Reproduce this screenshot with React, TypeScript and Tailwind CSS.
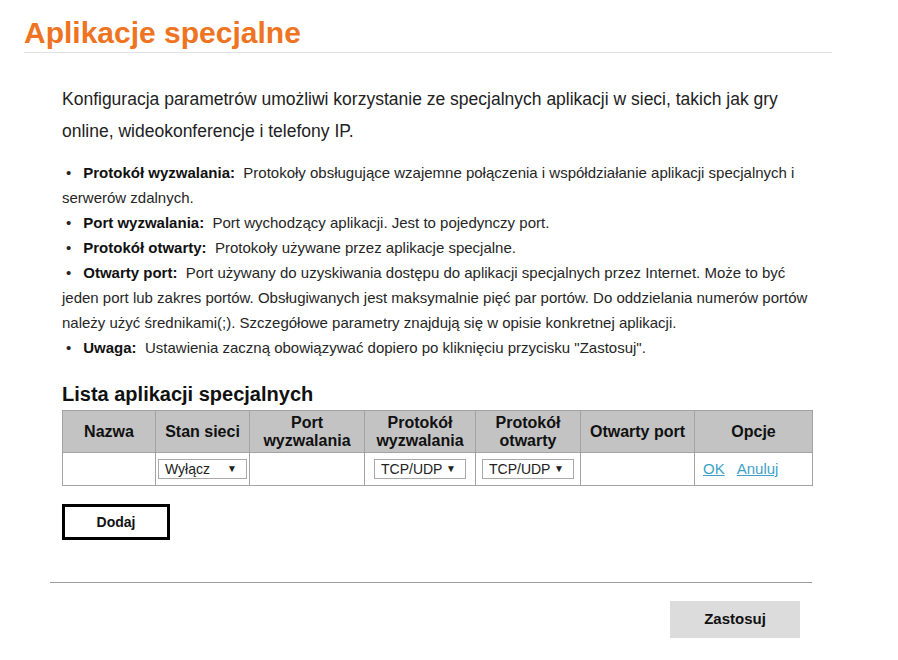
import React from "react";

const font = { fontFamily: '"Liberation Sans", Arial, sans-serif' };

function Select({ label, w }: { label: string; w: string }) {
  return (
    <div className={`mx-auto flex h-[20px] ${w} items-center justify-between border border-[#a9a9a9] bg-white pl-[6px] pr-[9px] text-[14px] leading-none text-[#222]`}>
      <span>{label}</span>
      <span className="text-[10px]">▼</span>
    </div>
  );
}

const bullets: { b: string; t: string }[] = [
  {
    b: "Protokół wyzwalania:",
    t: "Protokoły obsługujące wzajemne połączenia i współdziałanie aplikacji specjalnych i serwerów zdalnych.",
  },
  { b: "Port wyzwalania:", t: "Port wychodzący aplikacji. Jest to pojedynczy port." },
  { b: "Protokół otwarty:", t: "Protokoły używane przez aplikacje specjalne." },
  {
    b: "Otwarty port:",
    t: "Port używany do uzyskiwania dostępu do aplikacji specjalnych przez Internet. Może to być jeden port lub zakres portów. Obsługiwanych jest maksymalnie pięć par portów. Do oddzielania numerów portów należy użyć średnikami(;). Szczegółowe parametry znajdują się w opisie konkretnej aplikacji.",
  },
  { b: "Uwaga:", t: 'Ustawienia zaczną obowiązywać dopiero po kliknięciu przycisku "Zastosuj".' },
];

export default function App() {
  return (
    <div className="min-h-[660px] w-[898px] bg-white text-[#1a1a1a]" style={font}>
      <div className="ml-[24px] w-[808px] pt-[16px]">
        <h1 className="text-[30px] font-bold leading-[34px] text-[#ee7422]">Aplikacje specjalne</h1>
        <div className="mt-[2px] h-px bg-[#e2e2e2]" />
      </div>

      <div className="ml-[62px] w-[750px]">
        <p className="mt-[30px] w-[740px] text-[17.5px] leading-[32px] text-[#222]">
          Konfiguracja parametrów umożliwi korzystanie ze specjalnych aplikacji w sieci, takich jak gry online, wideokonferencje i telefony IP.
        </p>

        <div className="mt-[13px] w-[750px] text-[15px] leading-[25px] text-[#262626]">
          {bullets.map((x) => (
            <div key={x.b}>
              <span className="pl-[4px] pr-[12px]">•</span>
              <span className="font-bold text-[#111]">{x.b}</span>
              {"\u00a0 "}
              {x.t}
            </div>
          ))}
        </div>

        <h2 className="mt-[22px] text-[20px] font-bold leading-[24px] text-[#111]">Lista aplikacji specjalnych</h2>

        <table className="mt-[4px] w-[750px] table-fixed border-collapse border border-[#a3a3a3] text-center">
          <colgroup>
            <col className="w-[93px]" />
            <col className="w-[94px]" />
            <col className="w-[115px]" />
            <col className="w-[111px]" />
            <col className="w-[105px]" />
            <col className="w-[114px]" />
            <col className="w-[118px]" />
          </colgroup>
          <thead>
            <tr className="h-[42px] bg-[#c3c3c3] text-[16px] font-bold leading-[18px] text-[#111]">
              <th className="border border-[#a3a3a3]">Nazwa</th>
              <th className="border border-[#a3a3a3]">Stan sieci</th>
              <th className="border border-[#a3a3a3]">Port<br />wyzwalania</th>
              <th className="border border-[#a3a3a3]">Protokół<br />wyzwalania</th>
              <th className="border border-[#a3a3a3]">Protokół<br />otwarty</th>
              <th className="border border-[#a3a3a3]">Otwarty port</th>
              <th className="border border-[#a3a3a3]">Opcje</th>
            </tr>
          </thead>
          <tbody>
            <tr className="h-[33px]">
              <td className="border border-[#a3a3a3]"></td>
              <td className="border border-[#a3a3a3]"><Select label="Wyłącz" w="w-[89px]" /></td>
              <td className="border border-[#a3a3a3]"></td>
              <td className="border border-[#a3a3a3]"><Select label="TCP/UDP" w="w-[92px]" /></td>
              <td className="border border-[#a3a3a3]"><Select label="TCP/UDP" w="w-[92px]" /></td>
              <td className="border border-[#a3a3a3]"></td>
              <td className="border border-[#a3a3a3] pl-[8px] text-left text-[15px] text-[#3ea2c8]">
                <span className="underline">OK</span>
                <span className="ml-[12px] underline">Anuluj</span>
              </td>
            </tr>
          </tbody>
        </table>

        <button className="mt-[18px] flex h-[36px] w-[108px] items-center justify-center border-[3px] border-black bg-white text-[14px] font-bold text-[#111]">
          Dodaj
        </button>
      </div>

      <div className="ml-[50px] mt-[42px] h-px w-[762px] bg-[#9c9c9c]" />

      <div className="flex w-[800px] justify-end pt-[18px]">
        <button className="flex h-[37px] w-[130px] items-center justify-center bg-[#dcdcdc] text-[15px] font-bold text-[#111]">
          Zastosuj
        </button>
      </div>
    </div>
  );
}
